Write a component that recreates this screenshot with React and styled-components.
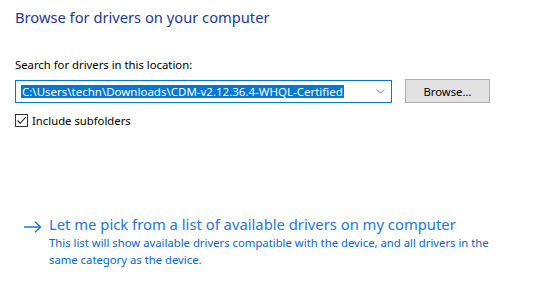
import React from 'react'
import styled, { createGlobalStyle } from 'styled-components'

const GlobalStyle = createGlobalStyle`
html, body {
    margin: 0;
    padding: 0;
    background: #ffffff;
}
body {
    font-family: "Noto Sans", "Open Sans", sans-serif;
    font-size: 11.3px;
    color: #000000;
}
`

function App() {
    return (
        <Page>
            <GlobalStyle />
            <Title>Browse for drivers on your computer</Title>

            <Label>Search for drivers in this location:</Label>
            <PathRow>
                <Combo>
                    <Selected>C:\Users\techn\Downloads\CDM-v2.12.36.4-WHQL-Certified</Selected>
                    <Chevron viewBox="0 0 10 6">
                        <path d="M0.5 0.5 L5 5 L9.5 0.5" fill="none" stroke="#606060" strokeWidth="1" />
                    </Chevron>
                </Combo>
                <Button>Browse...</Button>
            </PathRow>

            <CheckRow>
                <CheckBox>
                    <svg width="11" height="11" viewBox="0 0 11 11">
                        <path d="M1.5 5.5 L4.2 8.3 L9.8 2.2" fill="none" stroke="#222" strokeWidth="1.1" />
                    </svg>
                </CheckBox>
                <span>Include subfolders</span>
            </CheckRow>

            <Option>
                <Arrow viewBox="0 0 18 12">
                    <path d="M0 6 H16.5 M11 0.8 L16.5 6 L11 11.2" fill="none" stroke="#1e78d6" strokeWidth="1.4" />
                </Arrow>
                <OptionText>
                    <OptionTitle>Let me pick from a list of available drivers on my computer</OptionTitle>
                    <OptionDesc>
                        This list will show available drivers compatible with the device, and all drivers in the
                        <br />
                        same category as the device.
                    </OptionDesc>
                </OptionText>
            </Option>
        </Page>
    )
}

export default App

const Page = styled.div`
width: 544px;
height: 284px;
box-sizing: border-box;
padding: 7px 15px 0 15px;
overflow: hidden;
`

const Title = styled.div`
font-size: 14.7px;
color: #1c3a94;
line-height: 20px;
`

const Label = styled.div`
margin-top: 30px;
line-height: 16px;
`

const PathRow = styled.div`
display: flex;
align-items: center;
margin-top: 6px;
gap: 13px;
`

const Combo = styled.div`
width: 377px;
height: 23px;
box-sizing: border-box;
border: 1px solid #0078d7;
display: flex;
align-items: center;
padding: 0 6px 0 5px;
`

const Selected = styled.span`
background: #0078d7;
color: #ffffff;
font-size: 11.5px;
line-height: 13px;
height: 13px;
padding: 0 1px;
white-space: nowrap;
`

const Chevron = styled.svg`
width: 9px;
height: 5px;
margin-left: auto;
`

const Button = styled.div`
width: 85px;
height: 24px;
box-sizing: border-box;
background: #e1e1e1;
border: 1px solid #adadad;
display: flex;
align-items: center;
justify-content: center;
`

const CheckRow = styled.div`
display: flex;
align-items: center;
gap: 4px;
margin-top: 10px;
`

const CheckBox = styled.div`
width: 13px;
height: 13px;
box-sizing: border-box;
border: 1px solid #333333;
display: flex;
align-items: center;
justify-content: center;
`

const Option = styled.div`
display: flex;
align-items: flex-start;
margin-top: 86px;
padding-left: 9px;
`

const Arrow = styled.svg`
width: 18px;
height: 12px;
margin-top: 7px;
margin-right: 7px;
`

const OptionText = styled.div`
display: flex;
flex-direction: column;
color: #0a67cc;
`

const OptionTitle = styled.div`
font-size: 14.8px;
line-height: 20px;
color: #1e78d6;
`

const OptionDesc = styled.div`
line-height: 17px;
white-space: nowrap;
`
